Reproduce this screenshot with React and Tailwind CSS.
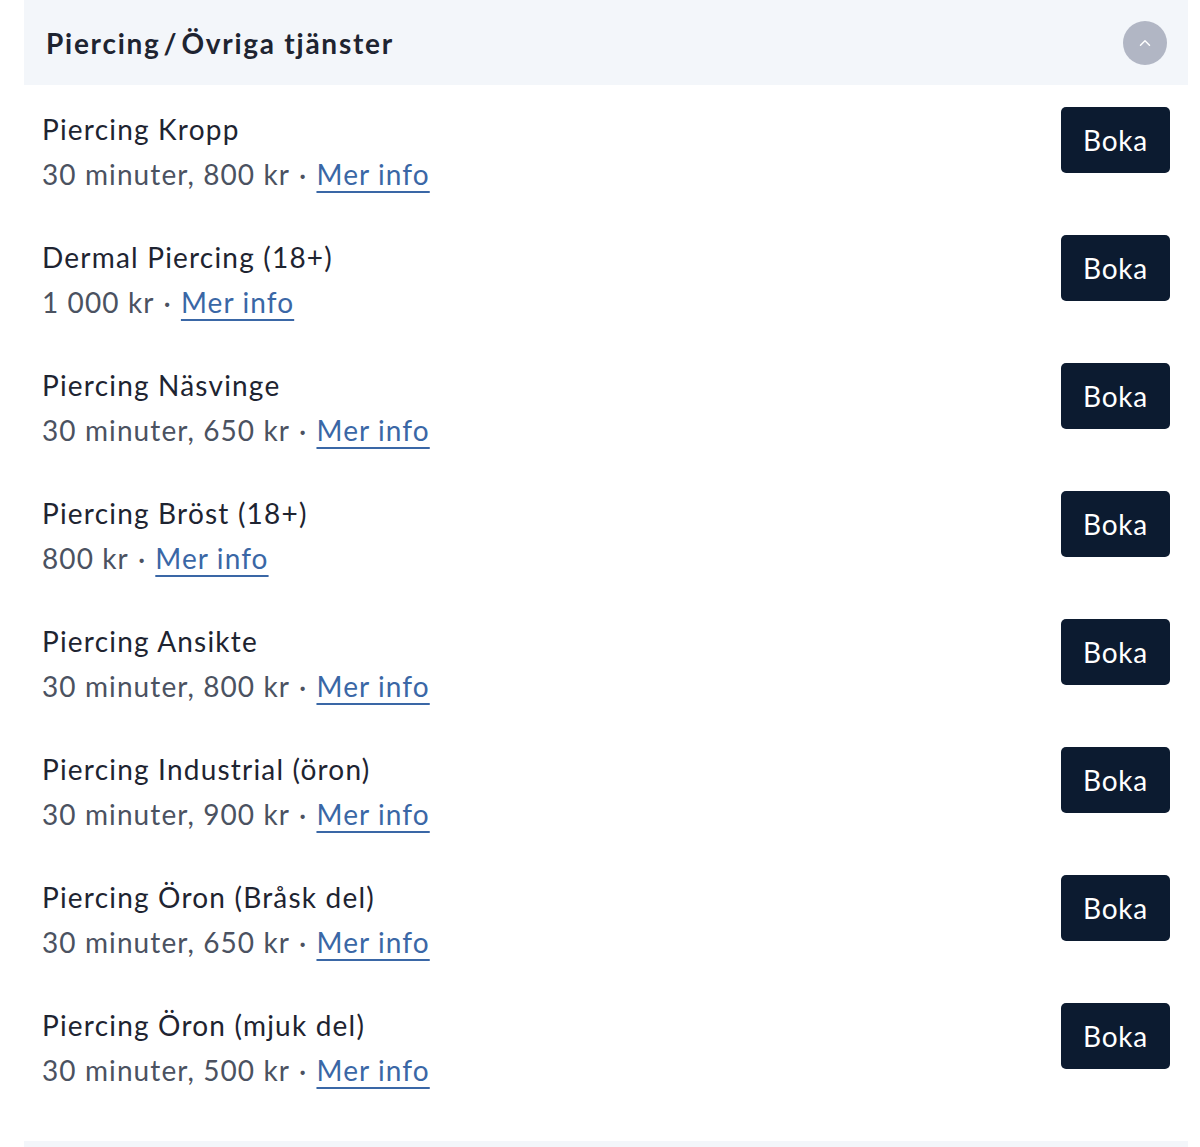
import { ChevronUp } from 'lucide-react';

const services = [
  { name: 'Piercing Kropp', info: '30 minuter, 800 kr' },
  { name: 'Dermal Piercing (18+)', info: '1 000 kr' },
  { name: 'Piercing Näsvinge', info: '30 minuter, 650 kr' },
  { name: 'Piercing Bröst (18+)', info: '800 kr' },
  { name: 'Piercing Ansikte', info: '30 minuter, 800 kr' },
  { name: 'Piercing Industrial (öron)', info: '30 minuter, 900 kr' },
  { name: 'Piercing Öron (Bråsk del)', info: '30 minuter, 650 kr' },
  { name: 'Piercing Öron (mjuk del)', info: '30 minuter, 500 kr' },
];

const ServiceRow = ({ service }) => (
  <div className="flex h-[128px] items-start justify-between px-[18px] pt-[22px]">
    <div>
      <div className="text-[28px] leading-[44px] tracking-[1.2px] text-[#1e2431]">{service.name}</div>
      <div className="text-[28px] leading-[46px] tracking-[1.1px] text-[#4b5261]">
        {service.info}
        <span className="mx-[9px]">·</span>
        <a
          href="#"
          className="text-[#3a67a6] underline decoration-2 underline-offset-[6px]"
        >
          Mer info
        </a>
      </div>
    </div>
    <button className="h-[66px] w-[109px] rounded-[5px] bg-[#0c1b30] text-[28px] tracking-[0.8px] text-white">
      Boka
    </button>
  </div>
);

export default function App() {
  return (
    <div className="min-h-[1147px] bg-white font-['Lato',sans-serif]">
      <div className="ml-6 mr-3">
        <div className="flex h-[85px] items-center justify-between bg-[#f3f6fa] pl-[22px] pr-[21px]">
          <h2 className="text-[28px] font-bold tracking-[1.75px] text-[#1e2431]">
            Piercing<span className="mx-[3px]">/</span>Övriga tjänster
          </h2>
          <button className="flex h-[44px] w-[44px] items-center justify-center rounded-full bg-[#b1b6c4] text-white">
            <ChevronUp size={18} strokeWidth={2} />
          </button>
        </div>
        <div className="pb-8">
          {services.map((s) => (
            <ServiceRow key={s.name} service={s} />
          ))}
        </div>
        <div className="h-[40px] bg-[#f3f6fa]" />
      </div>
    </div>
  );
}
